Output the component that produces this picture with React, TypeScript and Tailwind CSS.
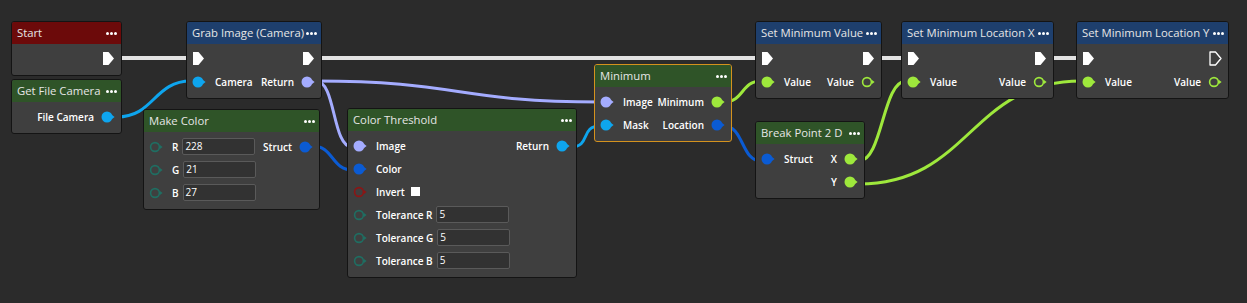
import React from "react";

const C = {
  lav: "#a4acff",
  sky: "#0ea5ee",
  blue: "#0b5bd3",
  lime: "#9ee83c",
  teal: "#1f6e62",
  red: "#8c1515",
  exec: "#e2e2e2",
};

const Pin = ({ color, hollow }: { color: string; hollow?: boolean }) => (
  <svg width="14" height="12" viewBox="0 0 14 12" className="shrink-0">
    {hollow ? (
      <circle cx="6" cy="6" r="4.4" fill="none" stroke={color} strokeWidth="1.6" />
    ) : (
      <circle cx="6" cy="6" r="5.5" fill={color} />
    )}
    <path d="M11 4 L13.6 6 L11 8 Z" fill={color} />
  </svg>
);

const Exec = ({ hollow }: { hollow?: boolean }) => (
  <svg width="13" height="15" viewBox="0 0 13 15" className="shrink-0">
    <path
      d="M1 1 H6.5 L12 7.5 L6.5 14 H1 Z"
      fill={hollow ? "none" : "#ffffff"}
      stroke="#ffffff"
      strokeWidth={hollow ? 1.3 : 0}
      strokeLinejoin="round"
    />
  </svg>
);

const Dots = () => (
  <div className="flex shrink-0 gap-[1px]">
    <span className="h-[3px] w-[3px] rounded-full bg-white" />
    <span className="h-[3px] w-[3px] rounded-full bg-white" />
    <span className="h-[3px] w-[3px] rounded-full bg-white" />
  </div>
);

type NodeProps = {
  x: number;
  y: number;
  w: number;
  title: string;
  head: string;
  selected?: boolean;
  children: React.ReactNode;
};

const Node = ({ x, y, w, title, head, selected, children }: NodeProps) => (
  <div
    className={`absolute rounded-[3px] bg-[#3f3f3f] ${
      selected ? "border-[1.5px] border-[#d4921e]" : "border border-[#141414]"
    }`}
    style={{ left: x, top: y, width: w }}
  >
    <div className={`flex h-[22px] items-center justify-between gap-[2px] rounded-t-[2px] pl-[5px] pr-[4px] ${head}`}>
      <span className="whitespace-nowrap text-[11.3px] leading-none text-[#e6e6e6]">{title}</span>
      <Dots />
    </div>
    <div className="pt-[3px] pb-[5px]">{children}</div>
  </div>
);

const Row = ({ left, right }: { left?: React.ReactNode; right?: React.ReactNode }) => (
  <div className="flex h-[23px] items-center justify-between">
    <div className="flex items-center gap-[9px] pl-[5px]">{left}</div>
    <div className="flex items-center gap-[7px] pr-[6px]">{right}</div>
  </div>
);

const Label = ({ children }: { children: React.ReactNode }) => (
  <span className="whitespace-nowrap text-[10px] font-semibold leading-none text-white">{children}</span>
);

const Field = ({ value, w }: { value: string; w: string }) => (
  <div className={`flex h-[17px] items-center rounded-[2px] border border-[#5a5a5a] bg-[#323232] pl-[2px] text-[10px] text-white ${w}`}>
    {value}
  </div>
);

const InputRow = ({ name, value }: { name: string; value: string }) => (
  <div className="flex items-center gap-[4px]">
    <Label>{name}</Label>
    <Field value={value} w="w-[73px]" />
  </div>
);

const ExecRow = ({ outHollow, noIn }: { outHollow?: boolean; noIn?: boolean }) => (
  <div className="flex h-[23px] items-center justify-between pl-[5px] pr-[6px]">
    {noIn ? <span /> : <Exec />}
    <Exec hollow={outHollow} />
  </div>
);

const wires = [
  { c: C.sky, a: [117, 117], b: [191, 81] },
  { c: C.lav, a: [316, 81], b: [352, 147] },
  { c: C.lav, a: [316, 81], b: [600, 102] },
  { c: C.blue, a: [313, 146], b: [352, 170] },
  { c: C.sky, a: [571, 147], b: [600, 126] },
  { c: C.lime, a: [724, 102], b: [761, 81] },
  { c: C.blue, a: [724, 126], b: [761, 161] },
  { c: C.lime, a: [859, 161], b: [906, 81] },
  { c: C.lime, a: [859, 184], b: [1081, 81] },
];

const execs = [
  [122, 186],
  [322, 755],
  [882, 901],
  [1054, 1076],
];

const curve = (a: number[], b: number[]) => {
  const dx = Math.max(Math.abs(b[0] - a[0]) * 0.5, 20);
  return `M${a[0]} ${a[1]} C${a[0] + dx} ${a[1]}, ${b[0] - dx} ${b[1]}, ${b[0]} ${b[1]}`;
};

export default function App() {
  return (
    <div
      className="relative h-[303px] w-[1247px] overflow-hidden bg-[#2b2b2b]"
      style={{ fontFamily: '"Open Sans", "Noto Sans", sans-serif' }}
    >
      <svg className="absolute inset-0" width="1247" height="303">
        {execs.map(([x1, x2]) => (
          <line key={x1} x1={x1} y1={58} x2={x2} y2={58} stroke={C.exec} strokeWidth="4" />
        ))}
        {wires.map((w, i) => (
          <path key={i} d={curve(w.a, w.b)} fill="none" stroke={w.c} strokeWidth="3" />
        ))}
      </svg>

      <Node x={11} y={21} w={111} title="Start" head="bg-[#6c0a0a]">
        <ExecRow noIn />
      </Node>

      <Node x={11} y={79} w={111} title="Get File Camera" head="bg-[#2f5428]">
        <Row right={<><Label>File Camera</Label><Pin color={C.sky} /></>} />
      </Node>

      <Node x={186} y={21} w={136} title="Grab Image (Camera)" head="bg-[#1e3f6d]">
        <ExecRow />
        <Row
          left={<><Pin color={C.sky} /><Label>Camera</Label></>}
          right={<><Label>Return</Label><Pin color={C.lav} /></>}
        />
      </Node>

      <Node x={143} y={109} w={177} title="Make Color" head="bg-[#2f5428]">
        <Row
          left={<><Pin color={C.teal} hollow /><InputRow name="R" value="228" /></>}
          right={<><Label>Struct</Label><Pin color={C.blue} /></>}
        />
        <Row left={<><Pin color={C.teal} hollow /><InputRow name="G" value="21" /></>} />
        <Row left={<><Pin color={C.teal} hollow /><InputRow name="B" value="27" /></>} />
      </Node>

      <Node x={347} y={108} w={230} title="Color Threshold" head="bg-[#2f5428]">
        <Row
          left={<><Pin color={C.lav} /><Label>Image</Label></>}
          right={<><Label>Return</Label><Pin color={C.sky} /></>}
        />
        <Row left={<><Pin color={C.blue} /><Label>Color</Label></>} />
        <Row
          left={<><Pin color={C.red} hollow /><Label>Invert</Label><span className="-ml-[3px] h-[9px] w-[9px] bg-white" /></>}
        />
        <Row left={<><Pin color={C.teal} hollow /><InputRow name="Tolerance R" value="5" /></>} />
        <Row left={<><Pin color={C.teal} hollow /><InputRow name="Tolerance G" value="5" /></>} />
        <Row left={<><Pin color={C.teal} hollow /><InputRow name="Tolerance B" value="5" /></>} />
      </Node>

      <Node x={594} y={64} w={138} title="Minimum" head="bg-[#2f5428]" selected>
        <Row
          left={<><Pin color={C.lav} /><Label>Image</Label></>}
          right={<><Label>Minimum</Label><Pin color={C.lime} /></>}
        />
        <Row
          left={<><Pin color={C.sky} /><Label>Mask</Label></>}
          right={<><Label>Location</Label><Pin color={C.blue} /></>}
        />
      </Node>

      <Node x={755} y={21} w={127} title="Set Minimum Value" head="bg-[#1e3f6d]">
        <ExecRow />
        <Row
          left={<><Pin color={C.lime} /><Label>Value</Label></>}
          right={<><Label>Value</Label><Pin color={C.lime} hollow /></>}
        />
      </Node>

      <Node x={755} y={121} w={110} title="Break Point 2 D" head="bg-[#2f5428]">
        <Row
          left={<><Pin color={C.blue} /><Label>Struct</Label></>}
          right={<><Label>X</Label><Pin color={C.lime} /></>}
        />
        <Row right={<><Label>Y</Label><Pin color={C.lime} /></>} />
      </Node>

      <Node x={901} y={21} w={153} title="Set Minimum Location X" head="bg-[#1e3f6d]">
        <ExecRow />
        <Row
          left={<><Pin color={C.lime} /><Label>Value</Label></>}
          right={<><Label>Value</Label><Pin color={C.lime} hollow /></>}
        />
      </Node>

      <Node x={1076} y={21} w={153} title="Set Minimum Location Y" head="bg-[#1e3f6d]">
        <ExecRow outHollow />
        <Row
          left={<><Pin color={C.lime} /><Label>Value</Label></>}
          right={<><Label>Value</Label><Pin color={C.lime} hollow /></>}
        />
      </Node>
    </div>
  );
}
